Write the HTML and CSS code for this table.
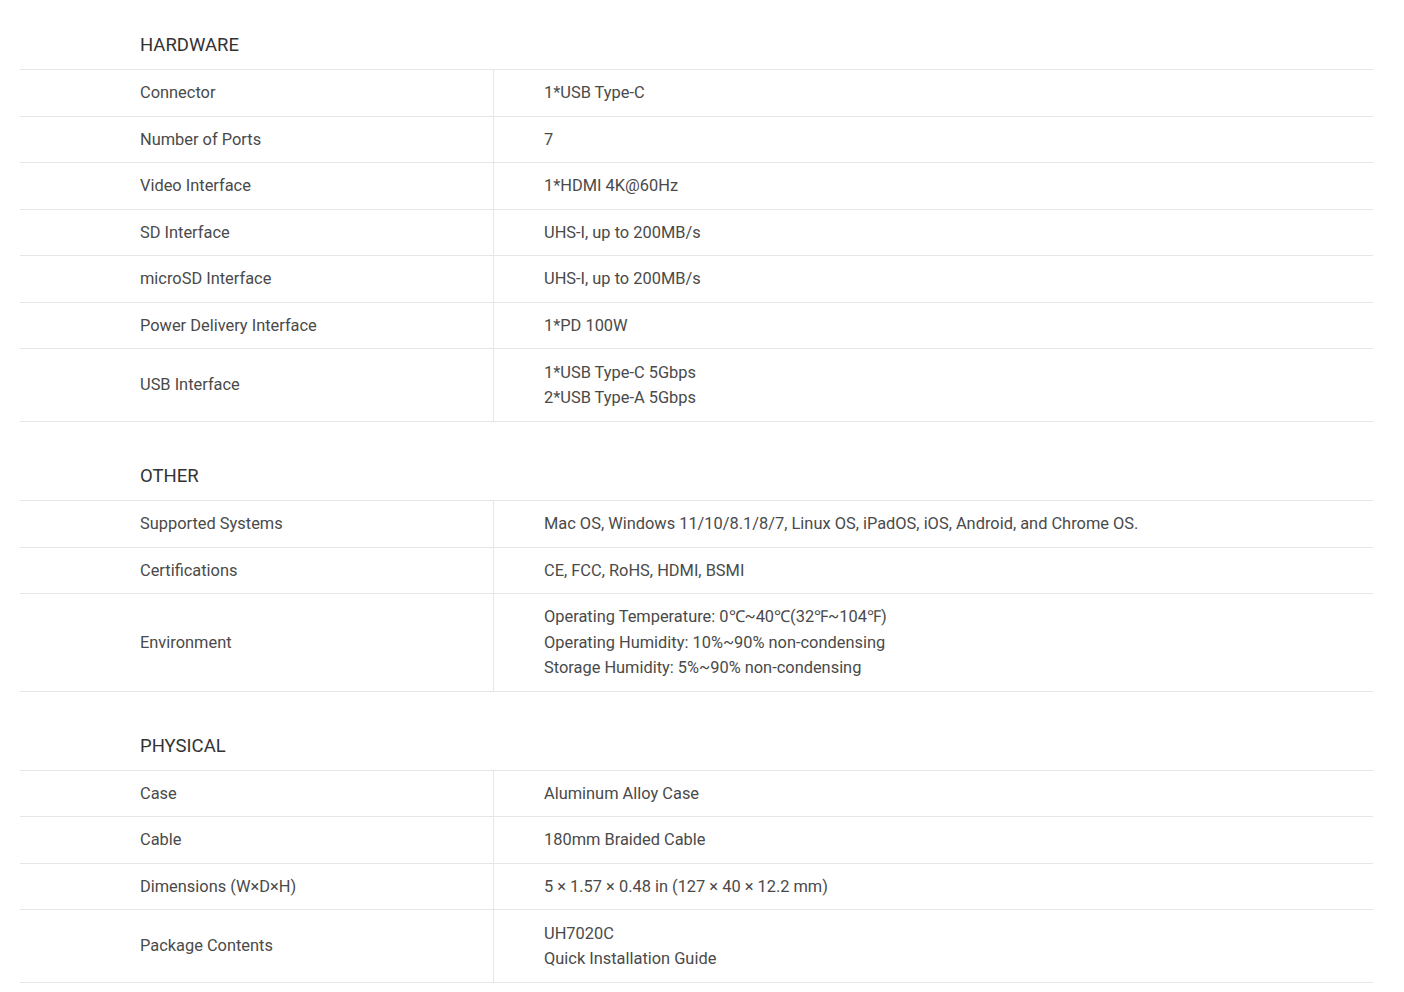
FILE: index.html
```html
<!DOCTYPE html>
<html lang="en">
<head>
<meta charset="utf-8">
<title>Specifications</title>
<link rel="stylesheet" href="styles.css">
</head>
<body>
<div class="specs">
  <section class="spec-section first">
    <h2 class="spec-title">HARDWARE</h2>
    <div class="spec-table">
      <div class="row"><div class="label">Connector</div><div class="value">1*USB Type-C</div></div>
      <div class="row"><div class="label">Number of Ports</div><div class="value">7</div></div>
      <div class="row"><div class="label">Video Interface</div><div class="value">1*HDMI 4K@60Hz</div></div>
      <div class="row"><div class="label">SD Interface</div><div class="value">UHS-I, up to 200MB/s</div></div>
      <div class="row"><div class="label">microSD Interface</div><div class="value">UHS-I, up to 200MB/s</div></div>
      <div class="row"><div class="label">Power Delivery Interface</div><div class="value">1*PD 100W</div></div>
      <div class="row"><div class="label">USB Interface</div><div class="value multi">1*USB Type-C 5Gbps<br>2*USB Type-A 5Gbps</div></div>
    </div>
  </section>
  <section class="spec-section">
    <h2 class="spec-title">OTHER</h2>
    <div class="spec-table">
      <div class="row"><div class="label">Supported Systems</div><div class="value">Mac OS, Windows 11/10/8.1/8/7, Linux OS, iPadOS, iOS, Android, and Chrome OS.</div></div>
      <div class="row"><div class="label">Certifications</div><div class="value">CE, FCC, RoHS, HDMI, BSMI</div></div>
      <div class="row"><div class="label">Environment</div><div class="value">Operating Temperature: 0℃~40℃(32℉~104℉)<br>Operating Humidity: 10%~90% non-condensing<br>Storage Humidity: 5%~90% non-condensing</div></div>
    </div>
  </section>
  <section class="spec-section">
    <h2 class="spec-title">PHYSICAL</h2>
    <div class="spec-table">
      <div class="row"><div class="label">Case</div><div class="value">Aluminum Alloy Case</div></div>
      <div class="row"><div class="label">Cable</div><div class="value">180mm Braided Cable</div></div>
      <div class="row"><div class="label">Dimensions (W×D×H)</div><div class="value">5 × 1.57 × 0.48 in (127 × 40 × 12.2 mm)</div></div>
      <div class="row"><div class="label">Package Contents</div><div class="value multi">UH7020C<br>Quick Installation Guide</div></div>
    </div>
  </section>
</div>
</body>
</html>
```
FILE: styles.css
```css
* { box-sizing: border-box; }
html, body { margin: 0; padding: 0; background: #fff; }
body {
  font-family: Roboto, "Liberation Sans", Arial, sans-serif;
  color: #4a4a4a;
  font-size: 16.4px;
}
.specs {
  padding: 0 31px 0 20px;
}
.spec-section { padding-top: 41px; }
.spec-section.first { padding-top: 32px; }
.spec-title {
  margin: 0;
  padding: 0 0 11px 120px;
  font-size: 18.5px;
  font-weight: 400;
  line-height: 26px;
  color: #333;
}
.spec-table {
  border-top: 1px solid #e6e6e6;
}
.row {
  display: grid;
  grid-template-columns: 474px 1fr;
  border-bottom: 1px solid #e6e6e6;
}
.label {
  padding: 10px 20px 10px 120px;
  line-height: 25.5px;
  display: flex;
  align-items: center;
  border-right: 1px solid #e6e6e6;
}
.value {
  padding: 10px 20px 10px 50px;
  line-height: 25.5px;
}
.value.multi {
  padding-top: 10.5px;
  padding-bottom: 10.5px;
}
```
